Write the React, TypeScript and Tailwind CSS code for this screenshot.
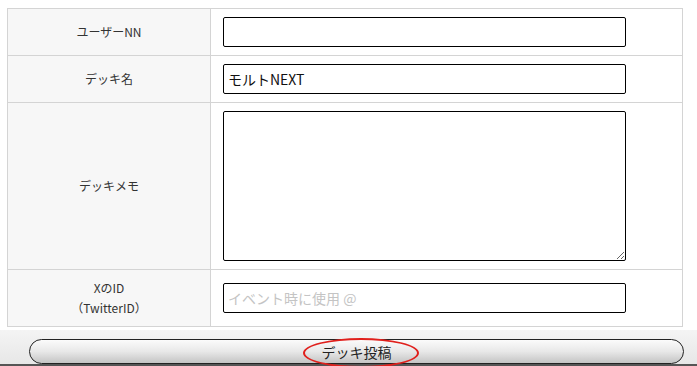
import React from "react";

const font = { fontFamily: '"Noto Sans CJK JP", "Noto Sans", sans-serif' };

function Label({ children, last }: { children: React.ReactNode; last?: boolean }) {
  return (
    <div
      className={
        last
          ? "flex flex-col items-center justify-center bg-[#f7f7f7] border-r border-[#d4d4d4] text-[12px] leading-[20px] text-[#333]"
          : "flex flex-col items-center justify-center bg-[#f7f7f7] border-r border-b border-[#d4d4d4] text-[12px] leading-[20px] text-[#333]"
      }
    >
      {children}
    </div>
  );
}

export default function App() {
  return (
    <div className="w-[697px] h-[366px] bg-white overflow-hidden flex flex-col" style={font}>
      <div className="pt-[8px] pl-[7px] pr-[14px]">
        <div className="border border-[#d4d4d4] grid grid-cols-[203px_1fr] grid-rows-[47px_47px_167px_56px] bg-white">
          <Label>ユーザーNN</Label>
          <div className="flex items-center pl-[12px] border-b border-[#d4d4d4]">
            <input className="w-[403px] h-[30px] border border-black rounded-[2px] px-[5px] text-[14px] outline-none" />
          </div>
          <Label>デッキ名</Label>
          <div className="flex items-center pl-[12px] border-b border-[#d4d4d4]">
            <input
              defaultValue="モルトNEXT"
              className="w-[403px] h-[30px] border border-black rounded-[2px] px-[4px] text-[14px] text-[#111] outline-none"
            />
          </div>
          <Label>デッキメモ</Label>
          <div className="flex items-center pl-[12px] border-b border-[#d4d4d4]">
            <textarea className="w-[403px] h-[150px] border border-black rounded-[2px] outline-none resize" />
          </div>
          <Label last>
            <span>XのID</span>
            <span>（TwitterID）</span>
          </Label>
          <div className="flex items-center pl-[12px]">
            <input
              placeholder="イベント時に使用 @"
              className="w-[403px] h-[30px] border border-black rounded-[2px] px-[4px] text-[14px] outline-none placeholder:text-[#c4c4c4]"
            />
          </div>
        </div>
      </div>
      <div className="mt-[3px] flex-1 bg-gradient-to-b from-[#f4f4f4] to-[#e6e6e6] flex flex-col">
        <div className="flex-1 pt-[9px] pl-[29px] pr-[13px]">
          <div className="relative h-[25px] rounded-full border border-[#222] bg-gradient-to-b from-[#fbfbfb] via-[#e8e8e8] to-[#c4c4c4] flex items-center justify-center">
            <span className="text-[14px] text-[#222] leading-none">デッキ投稿</span>
            <div className="absolute left-[273px] top-[-2px] w-[116px] h-[30px] rounded-[50%] border-[2px] border-[#e0201c]" />
          </div>
        </div>
        <div className="h-[3px] bg-[#555]" />
      </div>
    </div>
  );
}
